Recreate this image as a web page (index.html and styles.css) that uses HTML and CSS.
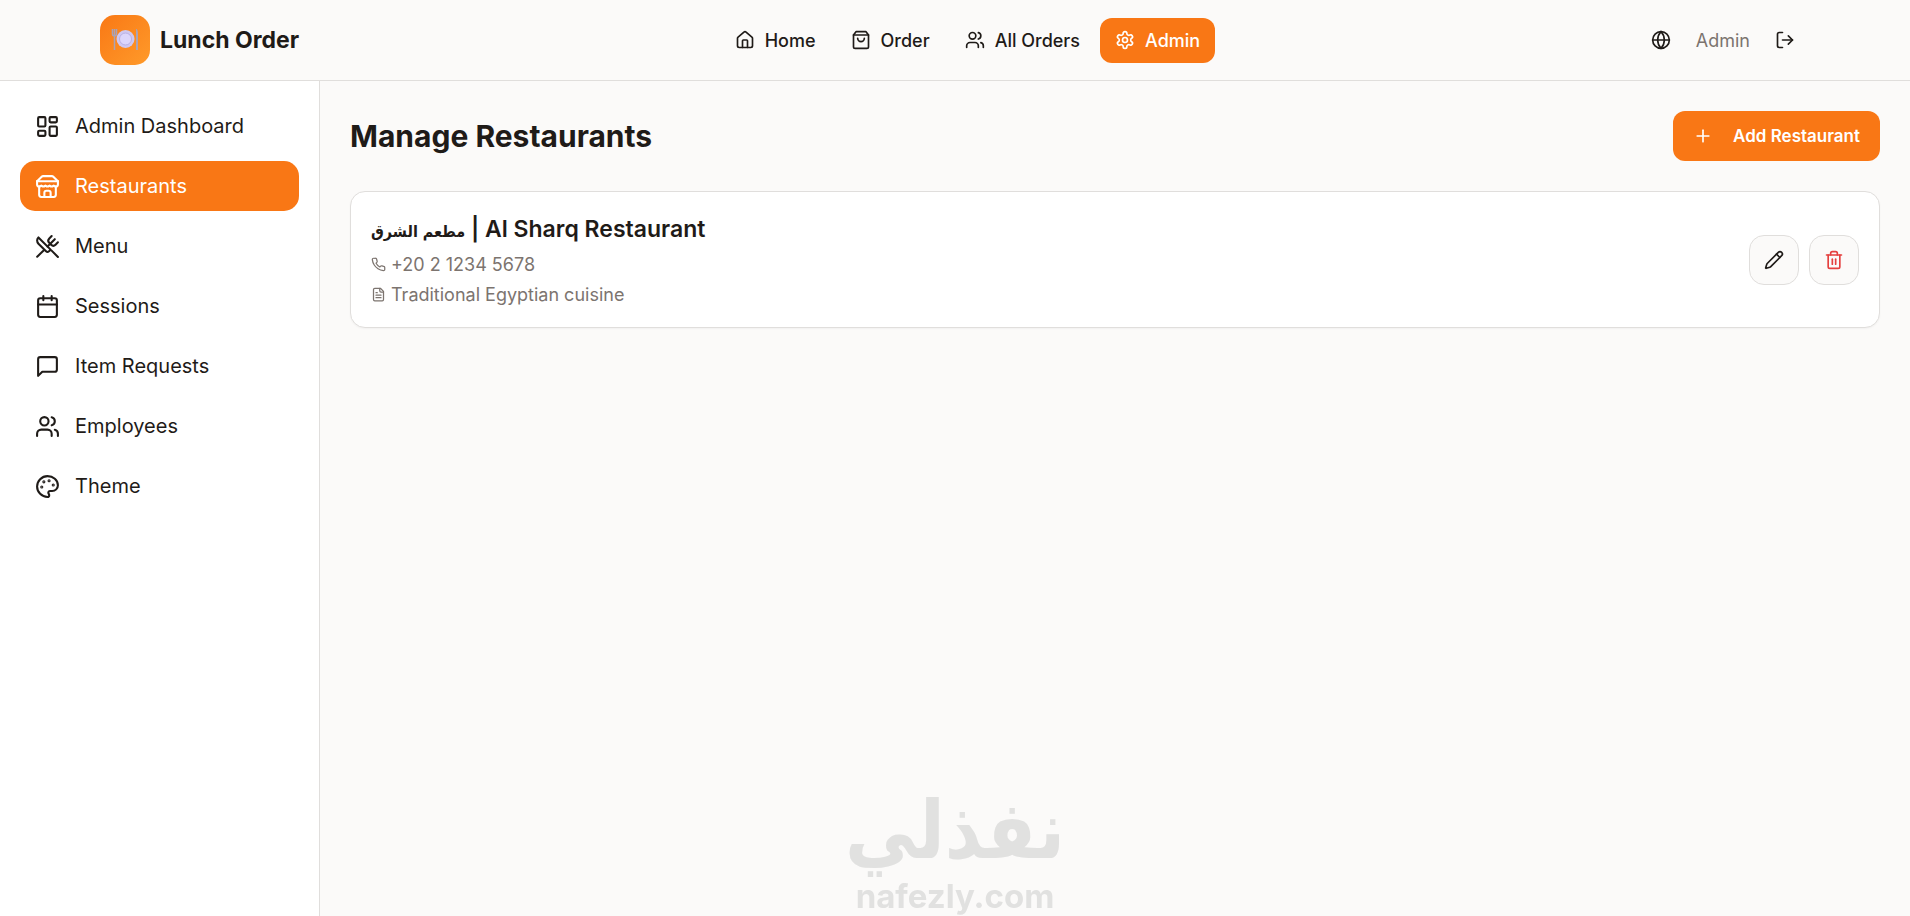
FILE: index.html
```html
<!DOCTYPE html>
<html lang="en">
<head>
  <meta charset="UTF-8" />
  <meta name="viewport" content="width=device-width, initial-scale=1.0"/>
  <title>Lunch Order - Manage Restaurants</title>
  <link rel="stylesheet" href="styles.css">
</head>
<body>

<header class="topbar">
  <a class="brand" href="#">
    <span class="brand-logo">
      <svg viewBox="0 0 28 24" aria-hidden="true">
        <path d="M1.500 1v5a2 2 0 0 0 4 0V1M3.500 1v21" fill="none" stroke="#a9a3b8" stroke-width="1.500"/>
        <path d="M25 22V1c1.500 0 2 2 2 5v16z" fill="#a9a3b8"/>
        <circle cx="14.500" cy="11" r="9" fill="#cfc8f0"/>
        <circle cx="14.500" cy="11" r="6" fill="#dcd6fb" stroke="#b9b0e4" stroke-width="1"/>
      </svg>
    </span>
    <span class="brand-name">Lunch Order</span>
  </a>

  <nav class="topnav">
    <a href="#">
      <svg class="icon" viewBox="0 0 24 24"><path d="M15 21v-8a1 1 0 0 0-1-1h-4a1 1 0 0 0-1 1v8"/><path d="M3 10a2 2 0 0 1 .709-1.528l7-5.999a2 2 0 0 1 2.582 0l7 5.999A2 2 0 0 1 21 10v9a2 2 0 0 1-2 2H5a2 2 0 0 1-2-2z"/></svg>
      Home
    </a>
    <a href="#">
      <svg class="icon" viewBox="0 0 24 24"><path d="M6 2 3 6v14a2 2 0 0 0 2 2h14a2 2 0 0 0 2-2V6l-3-4Z"/><path d="M3 6h18"/><path d="M16 10a4 4 0 0 1-8 0"/></svg>
      Order
    </a>
    <a href="#">
      <svg class="icon" viewBox="0 0 24 24"><path d="M16 21v-2a4 4 0 0 0-4-4H6a4 4 0 0 0-4 4v2"/><circle cx="9" cy="7" r="4"/><path d="M22 21v-2a4 4 0 0 0-3-3.870"/><path d="M16 3.130a4 4 0 0 1 0 7.750"/></svg>
      All Orders
    </a>
    <a class="active" href="#">
      <svg class="icon" viewBox="0 0 24 24"><path d="M12.220 2h-.44a2 2 0 0 0-2 2v.18a2 2 0 0 1-1 1.730l-.43.25a2 2 0 0 1-2 0l-.15-.08a2 2 0 0 0-2.730.73l-.22.38a2 2 0 0 0 .73 2.730l.15.1a2 2 0 0 1 1 1.720v.51a2 2 0 0 1-1 1.740l-.15.09a2 2 0 0 0-.73 2.730l.22.38a2 2 0 0 0 2.730.73l.15-.08a2 2 0 0 1 2 0l.43.25a2 2 0 0 1 1 1.730V20a2 2 0 0 0 2 2h.44a2 2 0 0 0 2-2v-.18a2 2 0 0 1 1-1.730l.43-.25a2 2 0 0 1 2 0l.15.08a2 2 0 0 0 2.730-.73l.22-.39a2 2 0 0 0-.73-2.730l-.15-.08a2 2 0 0 1-1-1.740v-.5a2 2 0 0 1 1-1.740l.15-.09a2 2 0 0 0 .73-2.730l-.22-.38a2 2 0 0 0-2.730-.73l-.15.08a2 2 0 0 1-2 0l-.43-.25a2 2 0 0 1-1-1.730V4a2 2 0 0 0-2-2z"/><circle cx="12" cy="12" r="3"/></svg>
      Admin
    </a>
  </nav>

  <div class="user">
    <button class="icon-btn" aria-label="Change language">
      <svg class="icon" viewBox="0 0 24 24"><circle cx="12" cy="12" r="10"/><path d="M12 2a14.500 14.500 0 0 0 0 20 14.500 14.500 0 0 0 0-20"/><path d="M2 12h20"/></svg>
    </button>
    <span class="user-name">Admin</span>
    <button class="icon-btn" aria-label="Log out">
      <svg class="icon" viewBox="0 0 24 24"><path d="M9 21H5a2 2 0 0 1-2-2V5a2 2 0 0 1 2-2h4"/><path d="m16 17 5-5-5-5"/><path d="M21 12H9"/></svg>
    </button>
  </div>
</header>

<div class="layout">
  <aside class="sidebar">
    <a href="#">
      <svg class="icon" viewBox="0 0 24 24"><rect width="7" height="9" x="3" y="3" rx="1"/><rect width="7" height="5" x="14" y="3" rx="1"/><rect width="7" height="9" x="14" y="12" rx="1"/><rect width="7" height="5" x="3" y="16" rx="1"/></svg>
      Admin Dashboard
    </a>
    <a class="active" href="#">
      <svg class="icon" viewBox="0 0 24 24"><path d="m2 7 4.410-4.410A2 2 0 0 1 7.830 2h8.340a2 2 0 0 1 1.420.59L22 7"/><path d="M4 12v8a2 2 0 0 0 2 2h12a2 2 0 0 0 2-2v-8"/><path d="M15 22v-4a2 2 0 0 0-2-2h-2a2 2 0 0 0-2 2v4"/><path d="M2 7h20"/><path d="M22 7v3a2 2 0 0 1-2 2a2.700 2.700 0 0 1-1.590-.63.7.7 0 0 0-.82 0A2.700 2.700 0 0 1 16 12a2.700 2.700 0 0 1-1.590-.63.7.7 0 0 0-.82 0A2.700 2.700 0 0 1 12 12a2.700 2.700 0 0 1-1.590-.63.7.7 0 0 0-.82 0A2.700 2.700 0 0 1 8 12a2.700 2.700 0 0 1-1.590-.63.7.7 0 0 0-.82 0A2.700 2.700 0 0 1 4 12a2 2 0 0 1-2-2V7"/></svg>
      Restaurants
    </a>
    <a href="#">
      <svg class="icon" viewBox="0 0 24 24"><path d="m16 2-2.300 2.300a3 3 0 0 0 0 4.200l1.800 1.800a3 3 0 0 0 4.200 0L22 8"/><path d="M15 15 3.300 3.300a4.200 4.200 0 0 0 0 6l7.300 7.300c.7.7 2 .7 2.800 0L15 15Zm0 0 7 7"/><path d="m2.100 21.800 6.400-6.300"/><path d="m19 5-7 7"/></svg>
      Menu
    </a>
    <a href="#">
      <svg class="icon" viewBox="0 0 24 24"><path d="M8 2v4"/><path d="M16 2v4"/><rect width="18" height="18" x="3" y="4" rx="2"/><path d="M3 10h18"/></svg>
      Sessions
    </a>
    <a href="#">
      <svg class="icon" viewBox="0 0 24 24"><path d="M21 15a2 2 0 0 1-2 2H7l-4 4V5a2 2 0 0 1 2-2h14a2 2 0 0 1 2 2z"/></svg>
      Item Requests
    </a>
    <a href="#">
      <svg class="icon" viewBox="0 0 24 24"><path d="M16 21v-2a4 4 0 0 0-4-4H6a4 4 0 0 0-4 4v2"/><circle cx="9" cy="7" r="4"/><path d="M22 21v-2a4 4 0 0 0-3-3.870"/><path d="M16 3.130a4 4 0 0 1 0 7.750"/></svg>
      Employees
    </a>
    <a href="#">
      <svg class="icon" viewBox="0 0 24 24"><g fill="currentColor"><circle cx="13.500" cy="6.500" r=".5"/><circle cx="17.500" cy="10.500" r=".5"/><circle cx="8.500" cy="7.500" r=".5"/><circle cx="6.500" cy="12.500" r=".5"/></g><path d="M12 2C6.500 2 2 6.500 2 12s4.500 10 10 10c.926 0 1.648-.746 1.648-1.688 0-.437-.18-.835-.437-1.125-.29-.289-.438-.652-.438-1.125a1.640 1.640 0 0 1 1.668-1.668h1.996c3.051 0 5.555-2.503 5.555-5.554C21.965 6.012 17.461 2 12 2z"/></svg>
      Theme
    </a>
  </aside>

  <main class="content">
    <div class="page-head">
      <h1>Manage Restaurants</h1>
      <button class="add-btn">
        <svg class="icon" viewBox="0 0 24 24"><path d="M5 12h14"/><path d="M12 5v14"/></svg>
        Add Restaurant
      </button>
    </div>

    <!-- Restaurant list -->
    <article class="card">
      <div class="card-info">
        <h2><span class="name-ar" lang="ar">مطعم الشرق</span> | Al Sharq Restaurant</h2>
        <p>
          <svg class="icon" viewBox="0 0 24 24"><path d="M22 16.920v3a2 2 0 0 1-2.180 2 19.790 19.790 0 0 1-8.630-3.070 19.500 19.500 0 0 1-6-6 19.790 19.790 0 0 1-3.070-8.670A2 2 0 0 1 4.110 2h3a2 2 0 0 1 2 1.720 12.840 12.840 0 0 0 .7 2.810 2 2 0 0 1-.45 2.110L8.090 9.910a16 16 0 0 0 6 6l1.270-1.270a2 2 0 0 1 2.110-.45 12.840 12.840 0 0 0 2.810.7A2 2 0 0 1 22 16.920z"/></svg>
          +20 2 1234 5678
        </p>
        <p>
          <svg class="icon" viewBox="0 0 24 24"><path d="M15 2H6a2 2 0 0 0-2 2v16a2 2 0 0 0 2 2h12a2 2 0 0 0 2-2V7Z"/><path d="M14 2v4a2 2 0 0 0 2 2h4"/><path d="M10 9H8"/><path d="M16 13H8"/><path d="M16 17H8"/></svg>
          Traditional Egyptian cuisine
        </p>
      </div>
      <div class="card-actions">
        <button class="action-btn" aria-label="Edit restaurant">
          <svg class="icon" viewBox="0 0 24 24"><path d="M21.174 6.812a1 1 0 0 0-3.986-3.987L3.842 16.174a2 2 0 0 0-.5.83l-1.321 4.352a.5.5 0 0 0 .623.622l4.353-1.320a2 2 0 0 0 .83-.497z"/><path d="m15 5 4 4"/></svg>
        </button>
        <button class="action-btn delete" aria-label="Delete restaurant">
          <svg class="icon" viewBox="0 0 24 24"><path d="M3 6h18"/><path d="M19 6v14c0 1-1 2-2 2H7c-1 0-2-1-2-2V6"/><path d="M8 6V4c0-1 1-2 2-2h4c1 0 2 1 2 2v2"/><path d="M10 11v6"/><path d="M14 11v6"/></svg>
        </button>
      </div>
    </article>
  </main>
</div>

<div class="watermark">
  <span class="watermark-ar" lang="ar">نفذلي</span>
  <span class="watermark-en">nafezly.com</span>
</div>

</body>
</html>
```
FILE: styles.css
```css
* {
  box-sizing: border-box;
}

body {
  margin: 0;
  min-height: 100vh;
  display: flex;
  flex-direction: column;
  font-family: Inter, "DejaVu Sans", sans-serif;
  font-size: 20px;
  background-color: #fbfaf9;
  color: #1f1b18;
}

a {
  color: inherit;
  text-decoration: none;
}

button {
  font-family: inherit;
  color: inherit;
  cursor: pointer;
}

.icon {
  width: 20px;
  height: 20px;
  flex-shrink: 0;
  fill: none;
  stroke: currentColor;
  stroke-width: 2;
  stroke-linecap: round;
  stroke-linejoin: round;
}

/* Top bar */
.topbar {
  display: flex;
  align-items: center;
  justify-content: space-between;
  height: 81px;
  padding: 0 100px;
  border-bottom: 1px solid #e0dedc;
}

.brand {
  display: flex;
  align-items: center;
  gap: 10px;
}

.brand-logo {
  display: flex;
  align-items: center;
  justify-content: center;
  width: 50px;
  height: 50px;
  border-radius: 15px;
  background: linear-gradient(135deg, #f97815, #ff9a2a);
}

.brand-logo svg {
  width: 28px;
  height: 24px;
}

.brand-name {
  font-size: 23px;
  font-weight: 700;
}

.topnav {
  display: flex;
  gap: 5px;
}

.topnav a {
  display: flex;
  align-items: center;
  gap: 10px;
  height: 45px;
  padding: 0 15px;
  border-radius: 12px;
  font-size: 18px;
  font-weight: 500;
}

.topnav .active,
.sidebar .active {
  background-color: #f97715;
  color: #fff;
}

.user {
  display: flex;
  align-items: center;
  gap: 10px;
}

.user-name {
  font-size: 18px;
  color: #7c746f;
}

.icon-btn {
  display: flex;
  align-items: center;
  justify-content: center;
  width: 50px;
  height: 45px;
  padding: 0;
  border: none;
  background: none;
}

/* Layout */
.layout {
  display: flex;
  flex: 1;
}

.sidebar {
  display: flex;
  flex-direction: column;
  gap: 10px;
  width: 320px;
  flex-shrink: 0;
  padding: 20px;
  border-right: 1px solid #e0dedc;
  background-color: #fff;
}

.sidebar a {
  display: flex;
  align-items: center;
  gap: 15px;
  height: 50px;
  padding: 0 15px;
  border-radius: 15px;
}

.sidebar .icon {
  width: 25px;
  height: 25px;
}

.content {
  flex: 1;
  padding: 30px;
}

.page-head {
  display: flex;
  align-items: center;
  justify-content: space-between;
  margin-bottom: 30px;
}

h1 {
  margin: 0;
  font-size: 30px;
  font-weight: 700;
}

.add-btn {
  display: flex;
  align-items: center;
  gap: 20px;
  height: 50px;
  padding: 0 20px;
  border: none;
  border-radius: 12px;
  background-color: #f97715;
  color: #fff;
  font-size: 17px;
  font-weight: 600;
}

/* Restaurant card */
.card {
  display: flex;
  align-items: center;
  justify-content: space-between;
  padding: 20px;
  border: 1px solid #e0dedc;
  border-radius: 15px;
  background-color: #fff;
  box-shadow: 0 1px 2px rgba(0, 0, 0, 0.04);
}

.card-info {
  display: flex;
  flex-direction: column;
  gap: 5px;
}

.card h2 {
  margin: 0;
  font-size: 23px;
  font-weight: 600;
  line-height: 35px;
}

.name-ar {
  font-family: "DejaVu Sans Condensed", "DejaVu Sans", sans-serif;
  font-size: 16px;
  line-height: 20px;
}

.card p {
  display: flex;
  align-items: center;
  gap: 5px;
  margin: 0;
  font-size: 18px;
  line-height: 25px;
  color: #7c746f;
}

.card p .icon {
  width: 15px;
  height: 15px;
}

.card-actions {
  display: flex;
  gap: 10px;
}

.action-btn {
  display: flex;
  align-items: center;
  justify-content: center;
  width: 50px;
  height: 50px;
  padding: 0;
  border: 1px solid #e0dedc;
  border-radius: 15px;
  background-color: #fbfaf9;
}

.action-btn.delete {
  color: #e5403f;
}

/* Watermark over the page */
.watermark {
  position: fixed;
  bottom: 0;
  left: 50%;
  transform: translateX(-50%);
  display: flex;
  flex-direction: column;
  align-items: center;
  color: #e1e1e0;
  font-weight: 700;
  pointer-events: none;
}

.watermark-ar {
  font-family: "DejaVu Sans Condensed", "DejaVu Sans", sans-serif;
  font-size: 80px;
  line-height: 90px;
}

.watermark-en {
  font-size: 33px;
  line-height: 40px;
}
```
